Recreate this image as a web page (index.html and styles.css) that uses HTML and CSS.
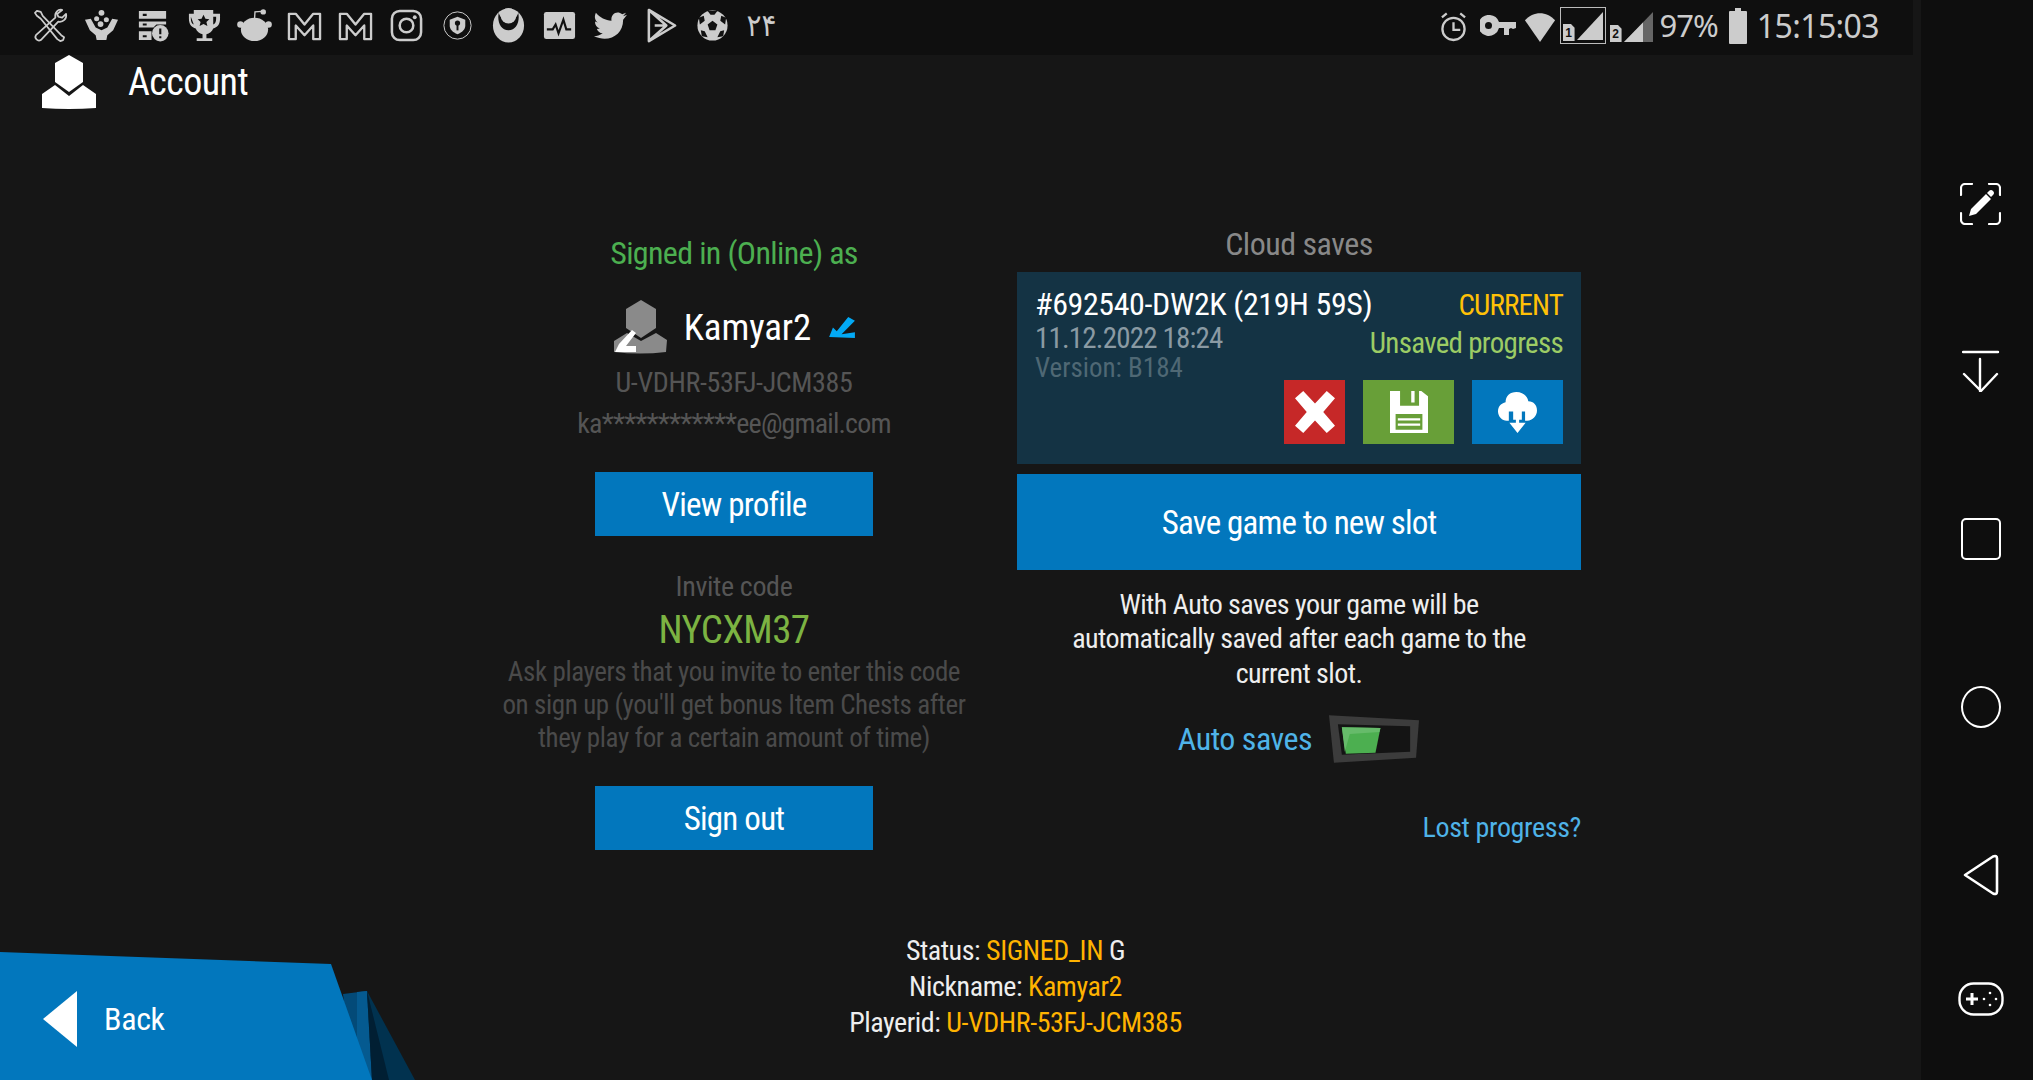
FILE: index.html
```html
<!DOCTYPE html>
<html lang="en">
<head>
<meta charset="utf-8">
<title>Account</title>
<link rel="stylesheet" href="styles.css">
</head>
<body>
<div class="app">
  <div class="screen">
    <header class="statusbar">
      <div class="notifs">
        <svg class="ni" viewBox="0 0 36 36"><g fill="none" stroke="#ccc" stroke-width="1.800" stroke-linejoin="round"><path d="M4 3l4 1 2 4 19 20 3 2-1 3-3 1-3-2L8 11 4 8 2 5z"/><path d="M30 2c-4-1-8 2-7 8L3 28c-2 3 2 7 5 5L26 14c5 1 9-3 8-8l-4 4-4-1-1-3z"/></g></svg>
        <svg class="ni" viewBox="0 0 36 36"><g fill="#ccc"><circle cx="18" cy="5" r="3"/><circle cx="13" cy="11" r="2.600"/><circle cx="23" cy="12" r="2.600"/><circle cx="17" cy="16.500" r="3"/><path d="M1 12l6-1 5 9 6 3 6-3 5-9 6 1-5 11-6 5-1 5H13l-1-5-6-5z"/></g></svg>
        <svg class="ni" viewBox="0 0 36 36"><g fill="#ccc"><path d="M4 3h28v8H4zM4 14h28v3H22l-3 3H4zM4 24h13v9H4z"/><circle cx="26" cy="26" r="8.500"/></g><path d="M26 21v6M26 29v2M8 7h4M8 17h4M8 29h4" stroke="#111" stroke-width="2.200"/></svg>
        <svg class="ni" viewBox="0 0 36 36"><path d="M8 2h20v4h7v5c0 6-3 9-7 10-1 3-4 5-7 6v4h6v3H11v-3h6v-4c-3-1-6-3-7-6-4-1-7-4-7-10V6h5zM5 9v2c0 3 1 5 3 6zM31 9h-3v8c2-1 3-3 3-6z" fill="#ccc" fill-rule="evenodd"/><path d="M18 7l2 4 4 .5-3 3 1 4-4-2-4 2 1-4-3-3 4-.5z" fill="#111"/></svg>
        <svg class="ni" viewBox="0 0 36 36"><g fill="#ccc"><circle cx="27" cy="4" r="2.800"/><ellipse cx="18" cy="22" rx="14" ry="12"/><circle cx="3.500" cy="17" r="3.300"/><circle cx="32.500" cy="17" r="3.300"/></g><path d="M18 12l.5-8 7-.5" fill="none" stroke="#ccc" stroke-width="1.400"/></svg>
        <svg class="ni" viewBox="0 0 36 36"><path d="M2 32V6h7l9 11 9-11h7v26h-7V18l-9 10-9-10v14z" fill="none" stroke="#ccc" stroke-width="2.400" stroke-linejoin="round"/></svg>
        <svg class="ni" viewBox="0 0 36 36"><path d="M2 32V6h7l9 11 9-11h7v26h-7V18l-9 10-9-10v14z" fill="none" stroke="#ccc" stroke-width="2.400" stroke-linejoin="round"/></svg>
        <svg class="ni" viewBox="0 0 36 36"><rect x="3" y="3" width="30" height="30" rx="8" fill="none" stroke="#ccc" stroke-width="2.600"/><circle cx="18" cy="18" r="7" fill="none" stroke="#ccc" stroke-width="2.600"/><circle cx="26.500" cy="9.500" r="2" fill="#ccc"/></svg>
        <svg class="ni" viewBox="0 0 36 36"><circle cx="18" cy="18" r="14" fill="none" stroke="#ccc" stroke-width="1"/><path d="M18 9l8 3v6c0 4-3 7-8 9-5-2-8-5-8-9v-6z" fill="#ccc"/><circle cx="18" cy="15.500" r="2.700" fill="#111"/><path d="M18 17v6" stroke="#111" stroke-width="2"/></svg>
        <svg class="ni" viewBox="0 0 36 36"><ellipse cx="18" cy="18" rx="16" ry="17.500" fill="#ccc"/><path d="M8 5C6 14 10 23 18 23s12-9 10-18c-1 4-4 8-10 8S9 9 8 5z" fill="#111"/><circle cx="18" cy="8" r="8" fill="#ccc"/></svg>
        <svg class="ni" viewBox="0 0 36 36"><rect x="2" y="4" width="32" height="28" rx="2.500" fill="#ccc"/><path d="M5 22h6l3-5 3 9 5-14 3 10h5" fill="none" stroke="#111" stroke-width="2.200"/></svg>
        <svg class="ni" viewBox="0 0 36 36"><path d="M35 7l-4 1.500L34 5l-4 1.500C25 2 18 6 19 13 13 13 7 10 3 5c-2 4-1 8 2 10l-3-1c0 4 2 6 5 7l-3 .5c1 3 3 4 6 4.500-3 2-6 3-9 3 15 7 30-1 30-17z" fill="#ccc"/></svg>
        <svg class="ni" viewBox="0 0 36 36"><path d="M5 2l27 16L5 34zM5 2l18 16L5 34M11 18h12" fill="none" stroke="#ccc" stroke-width="2.600" stroke-linejoin="round"/></svg>
        <svg class="ni" viewBox="0 0 36 36"><circle cx="18" cy="18" r="15.500" fill="#ccc"/><g fill="#111"><path d="M18 13l5 4-2 6h-6l-2-6z"/><path d="M13 3h10l-3 4h-4zM4 10l5-2 1 5-5 4zM32 10l-5-2-1 5 5 4zM7 29l-1-6 4 1 3 6zM29 29l1-6-4 1-3 6z"/></g></svg>
        <span class="clockfa">۲۴</span>
      </div>
      <div class="sysicons">
        <svg class="si alarm" viewBox="0 0 28 32"><g fill="none" stroke="#ccc" stroke-width="2.400"><circle cx="14" cy="19" r="11.500"/><path d="M14 12v8h7M2 7l5-4M26 7l-5-4"/></g></svg>
        <svg class="si key" viewBox="0 0 36 21"><path d="M10 0a10.500 10.500 0 0 1 9 7h17v6l-3 1-2-1-2 1v6h-5v-7h-5a10.500 10.500 0 1 1-9-13z" fill="#ccc"/><circle cx="8.500" cy="10.500" r="3.500" fill="#111"/></svg>
        <svg class="si wifi" viewBox="0 0 32 34"><path d="M0 11C9 1 23 1 32 11L16 34z" fill="#ccc"/></svg>
        <div class="simbox">
          <span class="simtag">1</span>
          <svg class="sig" viewBox="0 0 28 30"><path d="M0 30L28 0v30z" fill="#ccc"/></svg>
        </div>
        <div class="sim2">
          <span class="simtag">2</span>
          <svg class="sig sig2" viewBox="0 0 29 30"><path d="M0 30L29 0v30z" fill="#666"/><path d="M0 30l19-19.500V30z" fill="#ccc"/></svg>
        </div>
        <span class="pct">97%</span>
        <svg class="si batt" viewBox="0 0 18 36"><path d="M6 0h6v3h5a1 1 0 0 1 1 1v31a1 1 0 0 1-1 1H1a1 1 0 0 1-1-1V4a1 1 0 0 1 1-1h5z" fill="#ccc"/></svg>
        <span class="time">15:15:03</span>
      </div>
    </header>

    <div class="titlebar">
      <svg class="acct" viewBox="0 0 54 54"><g fill="#fff"><path d="M27 0l14 8v19L27 37 13 27V8z"/><path d="M0 39l13-9 14 11 14-11 13 9v14q-27 2-54 0z"/></g></svg>
      <h1 class="title">Account</h1>
    </div>

    <main class="columns">
      <section class="left">
        <div class="signed">Signed in (Online) as</div>
        <div class="user">
          <svg class="avatar" viewBox="0 0 54 54"><g fill="#8a8a8a"><path d="M27 0l15 9v19L27 38 12 28V9z"/><path d="M0 41l13-8 14 8 15-8 11 7-1 12q-26 3-52 0z"/></g><g fill="#fff"><path d="M5 44l13-14 4 3-10 13h10v6H1z"/></g></svg>
          <span class="name">Kamyar2</span>
          <svg class="pen" viewBox="0 0 28 22"><path d="M0 21L4 11l4 4L20 0l7 4-14 14 14-2v6z" fill="#03a9f4"/></svg>
        </div>
        <div class="pid">U-VDHR-53FJ-JCM385</div>
        <div class="mail">ka************ee@gmail.com</div>
        <button class="btn btn-profile">View profile</button>
        <div class="invite-label">Invite code</div>
        <div class="code">NYCXM37</div>
        <p class="hint">Ask players that you invite to enter this code<br>on sign up (you'll get bonus Item Chests after<br>they play for a certain amount of time)</p>
        <button class="btn btn-out">Sign out</button>
      </section>

      <section class="right">
        <div class="cloud">Cloud saves</div>
        <div class="slot">
          <div class="slot-top">
            <div class="slot-id">#692540-DW2K (219H 59S)</div>
            <div class="slot-cur">CURRENT</div>
          </div>
          <div class="slot-mid">
            <div class="slot-meta">
              <div class="slot-date">11.12.2022 18:24</div>
              <div class="slot-ver">Version: B184</div>
            </div>
            <div class="slot-unsaved">Unsaved progress</div>
          </div>
          <div class="slot-actions">
            <div class="act act-del"><svg class="ic-x" viewBox="0 0 34 40" preserveAspectRatio="none"><path d="M7 0l10 12L27 0l7 7-10 13 10 13-7 7-10-12L7 40l-7-7 10-13L0 7z" fill="#fff"/></svg></div>
            <div class="act act-save"><svg class="ic-save" viewBox="0 0 34 40" preserveAspectRatio="none"><path fill-rule="evenodd" d="M0 0h28l6 5v35H0zM9 0v14h17V0h-4v11h-3V0zM5 22v15h24V22z" fill="#fff"/><path d="M7 26h20v2H7zM7 31h20v2H7z" fill="#fff"/></svg></div>
            <div class="act act-load"><svg class="ic-cloud" viewBox="0 0 36 40" preserveAspectRatio="none"><path d="M17 0c6 0 10 4 11 9 5 0 8 4 8 9s-4 10-9 10h-2v-9h-3v8h-8v-8H10v9H8c-4 0-8-4-8-9s3-8 7-9c0-6 4-10 10-10z" fill="#fff"/><path d="M16.500 16h3v14h6L18 40 10.500 30h6z" fill="#fff"/></svg></div>
          </div>
        </div>
        <button class="btn btn-new">Save game to new slot</button>
        <p class="auto-note">With Auto saves your game will be<br>automatically saved after each game to the<br>current slot.</p>
        <div class="auto-row">
          <span class="auto-label">Auto saves</span>
          <svg class="toggle" viewBox="0 0 92 48"><path d="M0 0l91 5-3 38-83 5z" fill="#3c3c3c"/><path d="M9 9l73 2v26l-69 3z" fill="#141414"/><path d="M13 12l39 1-5 25-30 1z" fill="#4caf50"/><path d="M13 12l39 1-1 4-30 2-5 18z" fill="#66bb6a"/></svg>
        </div>
        <div class="lost">Lost progress?</div>
      </section>
    </main>

    <div class="footinfo">
      <div>Status: <span class="y">SIGNED_IN</span> G</div>
      <div>Nickname: <span class="y">Kamyar2</span></div>
      <div>Playerid: <span class="y">U-VDHR-53FJ-JCM385</span></div>
    </div>

    <div class="backwrap">
      <svg class="backshape" viewBox="0 0 420 128" preserveAspectRatio="none">
        <path d="M343 42l24-3 7 89h-20z" fill="#034a78"/>
        <path d="M357 40l10-1 5 89h-15z" fill="#055a90"/>
        <path d="M367 39l48 89h-43z" fill="#01324f"/>
        <path d="M367 39l22 89h-17z" fill="#011f33"/>
        <path d="M0 0l331 12 41 116H0z" fill="#0277bd"/>
      </svg>
      <div class="backinner">
        <span class="tri"></span>
        <span class="backtext">Back</span>
      </div>
    </div>
  </div>

  <nav class="rail">
    <svg class="r r-shot" viewBox="0 0 41 42"><g fill="none" stroke="#fff" stroke-width="2.200" stroke-linecap="round"><path d="M12 1H5a4 4 0 0 0-4 4v7M29 1h7a4 4 0 0 1 4 4v7M40 30v7a4 4 0 0 1-4 4h-7M12 41H5a4 4 0 0 1-4-4v-7"/></g><path d="M9 33l2-7L26 11l5 5-15 15zM27 10l2-2a2.500 2.500 0 0 1 4 4l-2 2z" fill="#fff"/></svg>
    <svg class="r r-down" viewBox="0 0 38 42"><g fill="none" stroke="#fff" stroke-width="2.400" stroke-linecap="round" stroke-linejoin="round"><path d="M1 2h35M18 9v32M2 24l17 17 16-17"/></g></svg>
    <div class="r-square"></div>
    <div class="r-circle"></div>
    <svg class="r r-back" viewBox="0 0 36 42"><path d="M2 21L30 2.500q4-1.500 4 2v33q0 3.500-4 2z" fill="none" stroke="#fff" stroke-width="2.600" stroke-linejoin="round"/></svg>
    <svg class="r r-game" viewBox="0 0 46 34"><rect x="1.500" y="1.500" width="43" height="31" rx="14" fill="none" stroke="#fff" stroke-width="2.400"/><path d="M8 17h12M14 11v12" stroke="#fff" stroke-width="3"/><g fill="#fff"><circle cx="32" cy="11" r="1.300"/><circle cx="32" cy="23" r="1.300"/><circle cx="26" cy="17" r="1.300"/><circle cx="38" cy="17" r="1.300"/></g></svg>
  </nav>
</div>
</body>
</html>
```
FILE: styles.css
```css
* { box-sizing: border-box; }
html, body { margin: 0; height: 100%; background: #161616; overflow: hidden; }
body { font-family: "Roboto Condensed", "Liberation Sans Narrow", Roboto, sans-serif; font-stretch: 75%; color: #fff; }
.app { display: flex; width: 2033px; height: 1080px; }
.screen { position: relative; width: 1921px; height: 1080px; display: flex; flex-direction: column; background: #161616; }
.statusbar { width: 1913px; height: 55px; flex: none; background: #0f0f0f; display: flex; justify-content: space-between; align-items: center; padding: 0 34px 4px 33px; }
.notifs { display: flex; align-items: center; gap: 15.900px; }
.ni { width: 35px; height: 35px; display: block; }
.clockfa { font-family: "DejaVu Sans", sans-serif; font-size: 31px; line-height: 1; color: #ccc; margin-left: 1px; }
.sysicons { display: flex; align-items: center; }
.si { display: block; }
.alarm { width: 27px; height: 32px; margin-right: 13px; }
.key { width: 36px; height: 21px; margin-right: 8px; }
.wifi { width: 32px; height: 32px; margin-right: 4px; }
.simbox { display: flex; align-items: flex-end; gap: 2px; width: 46px; height: 37px; border: 1px solid #bbb; padding: 1px 2px 2px; margin-right: 4px; }
.sim2 { display: flex; align-items: flex-end; gap: 2px; height: 33px; width: 43px; margin-right: 7px; }
.simtag { display: block; width: 12px; height: 17px; background: #ccc; color: #111; font: 700 12px/18px "Liberation Sans", sans-serif; text-align: center; flex: none; clip-path: polygon(0 0, 70% 0, 100% 22%, 100% 100%, 0 100%); }
.sig { display: block; width: 28px; height: 30px; }
.sig2 { width: 29px; }
.pct, .time { font-family: "Noto Sans", sans-serif; font-stretch: 100%; color: #ccc; font-size: 31px; line-height: 1; }
.pct { margin-right: 11px; letter-spacing: -1px; }
.batt { width: 18px; height: 36px; margin-right: 10px; }
.time { font-size: 32px; letter-spacing: -.6px; }
.titlebar { display: flex; align-items: center; height: 53px; padding-left: 42px; flex: none; }
.acct { width: 54px; height: 54px; display: block; margin-right: 32px; }
.title { font-size: 38px; font-weight: 400; margin: 0; line-height: 1; letter-spacing: -.015em; }
.columns { display: flex; padding: 0 0 0 454px; flex: none; }
.left { width: 560px; margin-right: 3px; padding-top: 126px; display: flex; flex-direction: column; align-items: center; text-align: center; }
.signed { color: #4caf50; font-size: 32px; line-height: 38px; letter-spacing: -.02em; }
.user { display: flex; align-items: center; margin: 28px 0 0 2px; height: 54px; }
.avatar { width: 54px; height: 54px; display: block; margin-right: 16px; }
.name { font-size: 37px; letter-spacing: -.003em; }
.pen { width: 27px; height: 21px; margin-left: 18px; display: block; }
.pid { color: #555; font-size: 28px; line-height: 34px; margin-top: 12px; letter-spacing: -.013em; }
.mail { color: #555; font-size: 28px; line-height: 34px; margin-top: 7px; letter-spacing: -.03em; }
.btn { display: block; border: 0; background: #0277bd; color: #fff; font: inherit; font-stretch: inherit; padding: 0; }
.btn-profile { width: 278px; height: 64px; font-size: 33px; margin-top: 31px; letter-spacing: -.023em; }
.invite-label { color: #555; font-size: 28px; line-height: 34px; margin-top: 34px; letter-spacing: -.013em; }
.code { color: #7cb342; font-size: 39px; line-height: 46px; margin-top: 3px; letter-spacing: -.015em; }
.hint { margin: 3px 0 0; color: #4a4a4a; font-size: 27px; line-height: 33px; letter-spacing: -.015em; }
.btn-out { width: 278px; height: 64px; font-size: 33px; margin-top: 31px; letter-spacing: -.023em; }
.right { width: 564px; padding-top: 117px; display: flex; flex-direction: column; }
.cloud { text-align: center; color: #888; font-size: 32px; line-height: 38px; letter-spacing: -.015em; }
.slot { background: #143344; height: 192px; margin-top: 9px; padding: 14px 18px 0; display: flex; flex-direction: column; }
.slot-top { display: flex; justify-content: space-between; align-items: baseline; }
.slot-id { font-size: 32px; line-height: 36px; letter-spacing: -.0125em; }
.slot-cur { color: #ffc107; font-size: 29px; line-height: 36px; letter-spacing: -.03em; }
.slot-mid { display: flex; justify-content: space-between; align-items: flex-start; }
.slot-date { color: #8a9aa3; font-size: 29px; line-height: 30px; letter-spacing: -.028em; }
.slot-ver { color: #4f6874; font-size: 27px; line-height: 32px; margin-top: -1px; }
.slot-unsaved { color: #9ccc65; font-size: 29px; line-height: 36px; margin-top: 2px; letter-spacing: -.024em; }
.slot-actions { display: flex; justify-content: flex-end; gap: 18px; margin-top: -4px; }
.act { height: 64px; display: flex; align-items: center; justify-content: center; }
.act-del { width: 61px; background: #c62828; }
.act-save { width: 91px; background: #689f38; }
.act-load { width: 91px; background: #0277bd; }
.ic-x { width: 40px; height: 42px; }
.ic-save { width: 38px; height: 42px; }
.ic-cloud { width: 39px; height: 41px; }
.btn-new { width: 564px; height: 96px; font-size: 33px; margin-top: 10px; letter-spacing: -.026em; }
.auto-note { margin: 18px 0 0; text-align: center; font-size: 28px; line-height: 34.400px; color: #eee; letter-spacing: -.019em; }
.auto-row { display: flex; align-items: center; justify-content: center; margin-top: 24px; }
.auto-label { color: #4fb3e8; font-size: 32px; margin-right: 17px; letter-spacing: -.015em; }
.toggle { width: 91px; height: 48px; display: block; }
.lost { color: #4fb3e8; font-size: 28px; line-height: 34px; text-align: right; margin-top: 48px; letter-spacing: -.013em; }
.footinfo { position: absolute; left: 0; top: 933px; width: 2031px; text-align: center; font-size: 28px; line-height: 36px; color: #eee; letter-spacing: -.016em; }
.y { color: #ffb300; }
.backwrap { position: absolute; left: 0; bottom: 0; width: 420px; height: 128px; }
.backshape { display: block; width: 420px; height: 128px; }
.backinner { position: absolute; left: 43px; top: 39px; display: flex; align-items: center; }
.tri { width: 0; height: 0; border-style: solid; border-width: 28px 34px 28px 0; border-color: transparent #fff transparent transparent; margin-right: 27px; }
.backtext { font-size: 32px; letter-spacing: -.01em; }
.rail { width: 112px; height: 1080px; background: #0e0e0e; display: flex; flex-direction: column; align-items: center; padding-left: 7px; }
.r { display: block; }
.r-shot { width: 41px; height: 42px; margin-top: 183px; }
.r-down { width: 38px; height: 42px; margin-top: 125px; }
.r-square { width: 40px; height: 42px; border: 2.500px solid #fff; border-radius: 5px; margin-top: 126px; flex: none; }
.r-circle { width: 40px; height: 42px; border: 2.500px solid #fff; border-radius: 50%; margin-top: 126px; flex: none; }
.r-back { width: 36px; height: 42px; margin-top: 126px; }
.r-game { width: 46px; height: 34px; margin-top: 86px; }
```
